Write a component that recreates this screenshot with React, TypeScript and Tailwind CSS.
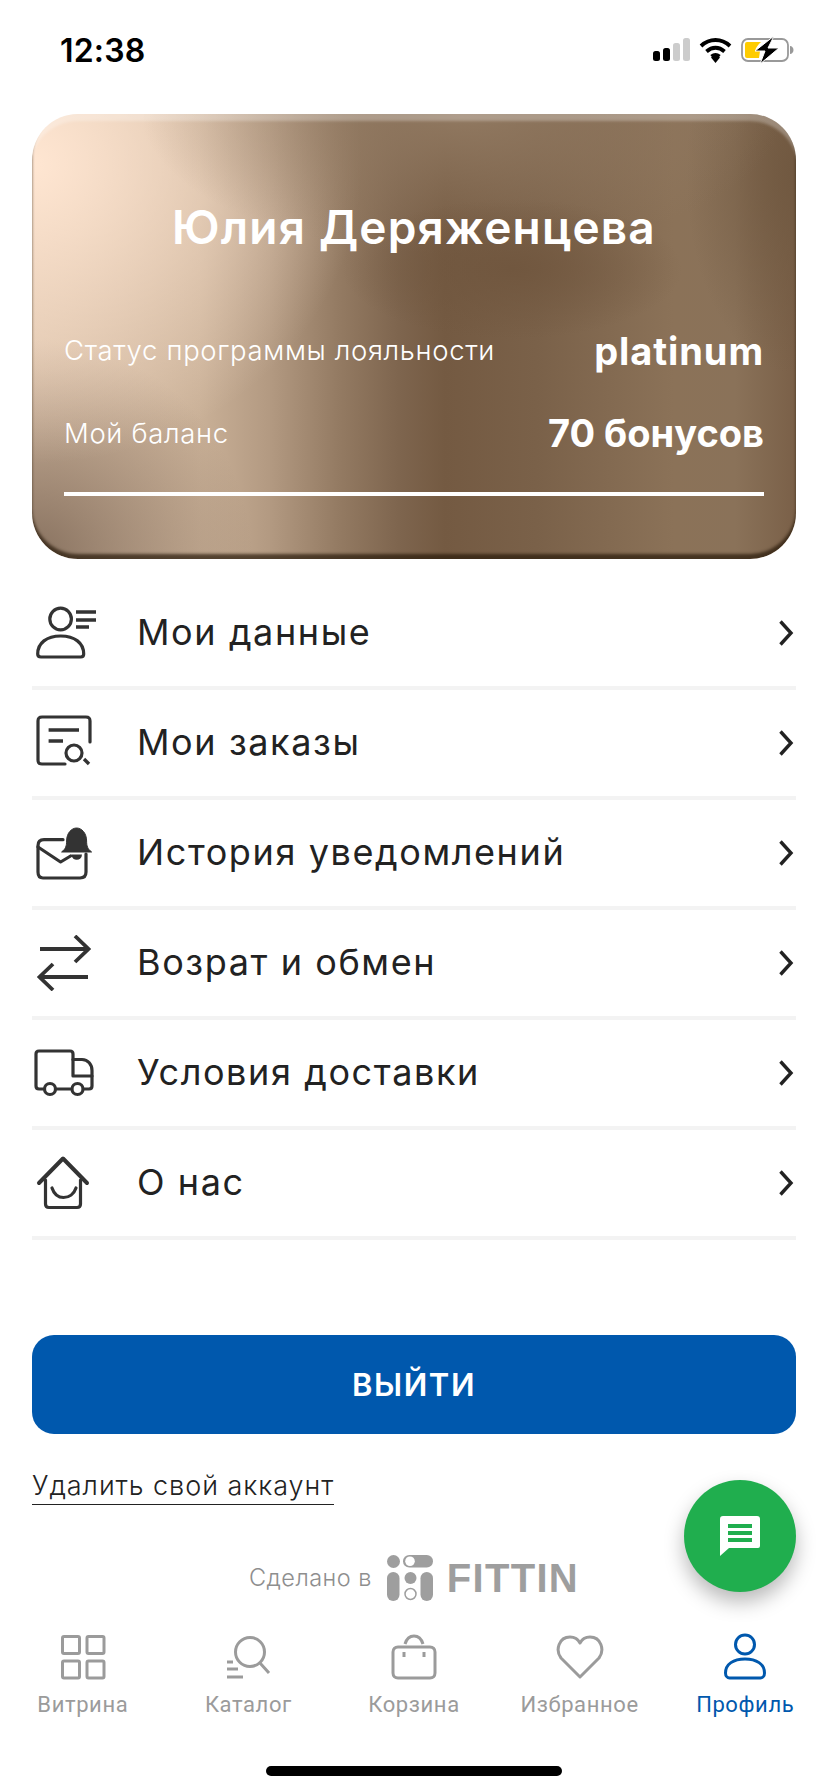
import React from "react";

const Mont = "font-['Inter','Liberation_Sans',sans-serif]";

function Chevron() {
  return (
    <svg width="16" height="28" viewBox="0 0 16 28" fill="none">
      <path d="M2.500 2.500L13 14 2.500 25.500" stroke="#222" strokeWidth="3.400" />
    </svg>
  );
}

const S = { fill: "none", stroke: "#333", strokeWidth: 3.2, strokeLinejoin: "round" as const, strokeLinecap: "round" as const };
const L = { fill: "none", stroke: "#333", strokeWidth: 3.4 };

function IconUser() {
  return (
    <svg width="64" height="56" viewBox="0 0 64 56">
      <circle cx="26.600" cy="14" r="10.800" {...S} />
      <path d="M3.700 49c0-11 9-18 23-18s23 7 23 18c0 2-1 3-3 3H7c-2 0-3.300-1-3.300-3z" {...S} />
      <path d="M42 7h20M42 15h20M42 22h13" {...L} />
    </svg>
  );
}
function IconOrders() {
  return (
    <svg width="64" height="56" viewBox="0 0 64 56">
      <path d="M56 27V6c0-3-1-4-4-4H8C5 2 4 3 4 6v39c0 3 1 4 4 4h23" {...S} />
      <path d="M14.600 15H45M14.600 26H29" {...L} />
      <circle cx="40" cy="38" r="8" {...S} />
      <path d="M50 44l5 5" {...L} />
    </svg>
  );
}
function IconMail() {
  return (
    <svg width="64" height="56" viewBox="0 0 64 56">
      <path d="M29 14.700H10c-4 0-6 2-6 6V47c0 4 2 6 5 6h37c4 0 6-2 6-6V29" {...S} />
      <path d="M4 22l22.600 15 10-6" {...S} />
      <path d="M27.600 27c4-3 5-6 5-11 0-8 5-13 10-13s10 5 10 13c0 5 1 8 5 11z" fill="#333" stroke="#333" strokeWidth="1" strokeLinejoin="round" />
      <path d="M37.500 29.500H48a5.250 5.250 0 0 1-10.500 0z" fill="#333" />
    </svg>
  );
}
function IconSwap() {
  return (
    <svg width="64" height="56" viewBox="0 0 64 56">
      <path d="M6 14h48M41 1l13.500 13L41 27M54 42H6M19 29L5.500 42 19 55" {...L} strokeWidth={3.800} />
    </svg>
  );
}
function IconTruck() {
  return (
    <svg width="64" height="56" viewBox="0 0 64 56">
      <path d="M10 44H5c-2 0-3-1-3-3V9c0-2 1-3 3-3h31c2 0 3 1 3 3v22h19" {...S} />
      <path d="M39 14.500h9c6 0 10 5 10 11V41c0 2-1 3-3 3h-5" {...S} />
      <path d="M22 44h15" {...S} />
      <circle cx="16" cy="44" r="5.500" {...S} />
      <circle cx="43.500" cy="44" r="5.500" {...S} />
    </svg>
  );
}
function IconHome() {
  return (
    <svg width="64" height="56" viewBox="0 0 64 56">
      <path d="M5 28L29 3.500 53 28" {...S} strokeWidth={4} />
      <path d="M11.500 25v24c0 2 1 3.500 3.500 3.500h28c2.500 0 3.500-1.500 3.500-3.500V25" {...S} />
      <path d="M18 33c2 6 6 9.500 11.500 9.500S40 39 42 33" {...S} />
    </svg>
  );
}

const rows: [string, React.ReactNode][] = [
  ["Мои данные", <IconUser />],
  ["Мои заказы", <IconOrders />],
  ["История уведомлений", <IconMail />],
  ["Возрат и обмен", <IconSwap />],
  ["Условия доставки", <IconTruck />],
  ["О нас", <IconHome />],
];

const G = { fill: "none", stroke: "#9b9b9b", strokeWidth: 3, strokeLinejoin: "round" as const };

const tabs: [string, React.ReactNode, boolean][] = [
  ["Витрина", (
    <svg width="46" height="46" viewBox="0 0 46 46">
      <rect x="2.500" y="2.500" width="17" height="17" rx="1.500" {...G} />
      <rect x="27" y="2.500" width="17" height="17" rx="1.500" {...G} />
      <rect x="2.500" y="27" width="17" height="17" rx="1.500" {...G} />
      <rect x="27" y="27" width="17" height="17" rx="1.500" {...G} />
    </svg>
  ), false],
  ["Каталог", (
    <svg width="46" height="46" viewBox="0 0 46 46">
      <circle cx="25" cy="18" r="14.500" {...G} />
      <path d="M35 29l9 10M2 28h6M2 35h11M2 43h16" fill="none" stroke="#9b9b9b" strokeWidth="3" />
    </svg>
  ), false],
  ["Корзина", (
    <svg width="46" height="46" viewBox="0 0 46 46">
      <path d="M7 13h32c3 0 5 2 5 5v21c0 3-2 5-5 5H7c-3 0-5-2-5-5V18c0-3 2-5 5-5z" {...G} />
      <path d="M13 23v-5M33 23v-5" fill="none" stroke="#9b9b9b" strokeWidth="3" />
      <path d="M14 10c1.500-5 5-8 9-8s7.500 3 9 8" {...G} />
    </svg>
  ), false],
  ["Избранное", (
    <svg width="48" height="46" viewBox="0 0 48 46">
      <path d="M24 43L5 24C-1 16 3 3 14 3c5 0 8 2 10 6 2-4 5-6 10-6 11 0 15 13 9 21z" {...G} />
    </svg>
  ), false],
  ["Профиль", (
    <svg width="46" height="48" viewBox="0 0 46 48">
      <circle cx="23" cy="11.500" r="9.500" fill="none" stroke="#0058ad" strokeWidth="3" />
      <path d="M3.500 40c0-9 8-14 19.500-14s19.500 5 19.500 14c0 3-2 5-4 5H7.500c-2 0-4-2-4-5z" fill="none" stroke="#0058ad" strokeWidth="3" />
    </svg>
  ), true],
];

export default function App() {
  return (
    <div className={`relative w-[828px] h-[1792px] bg-white overflow-hidden ${Mont}`}>
      {/* status bar */}
      <div className="flex items-center justify-between h-[100px] pl-[60px] pr-[34px]">
        <span className="text-[32px] font-semibold text-black tracking-[0.2px] mt-[1px]">12:38</span>
        <div className="flex items-center gap-[9px]">
          <svg width="37" height="24" viewBox="0 0 37 24">
            <rect x="0" y="13" width="7" height="10" rx="2.500" fill="#000" />
            <rect x="10" y="10" width="7" height="13" rx="2.500" fill="#000" />
            <rect x="20" y="5" width="7" height="18" rx="2.500" fill="#ccc" />
            <rect x="30" y="0" width="7" height="23" rx="2.500" fill="#ccc" />
          </svg>
          <svg width="33" height="26" viewBox="0 0 33 26">
            <path d="M2 9c8.500-8 20.500-8 29 0M7.500 14.500c5.500-5 12.500-5 18 0M12.500 19.500c2.500-2 5.500-2 8 0" fill="none" stroke="#000" strokeWidth="3.800" />
            <path d="M12 20.500L16.500 26l4.500-5.500c-2.500-2.500-6.500-2.500-9 0z" fill="#000" />
          </svg>
          <svg width="53" height="28" viewBox="0 0 53 28">
            <rect x="1" y="3" width="46" height="22" rx="6" fill="none" stroke="#999" strokeWidth="1.800" />
            <path d="M4 8a2 2 0 0 1 2-2h14c-3 3-5 5-6 9h5l-1 7H6a2 2 0 0 1-2-2z" fill="#ffcc00" />
            <path d="M33 0L14 15h10l-5 13 19-16H27z" fill="#000" stroke="#fff" strokeWidth="1" />
            <path d="M49 10c2 0 3.500 2 3.500 4s-1.500 4-3.500 4z" fill="#999" />
          </svg>
        </div>
      </div>

      <main className="px-[32px] pt-[14px]">
        {/* card */}
        <section className="h-[445px] rounded-[46px] overflow-hidden pt-[88px] px-[32px] text-white [background-image:radial-gradient(ellipse_170px_70px_at_480px_155px,rgba(112,86,62,0.9),rgba(112,86,62,0)),radial-gradient(ellipse_320px_140px_at_430px_0px,rgba(146,122,98,0.95),rgba(146,122,98,0)),radial-gradient(ellipse_110px_200px_at_100%_60px,rgba(112,88,64,0.95),rgba(112,88,64,0)),radial-gradient(ellipse_330px_300px_at_0px_50px,rgba(255,230,210,1),rgba(255,230,210,0.5)_50%,rgba(255,230,210,0)),radial-gradient(ellipse_220px_220px_at_0px_100%,rgba(130,108,90,0.95),rgba(130,108,90,0)),linear-gradient(90deg,#d9c0a8_0%,#c9b097_22%,#b39a82_31%,#947b63_40%,#7e654e_48%,#745a42_54%,#7a6149_66%,#8b7258_84%,#8a7259_92%,#7a6048_100%)] shadow-[inset_0_-5px_3px_rgba(40,25,10,0.7),inset_0_9px_3px_-2px_rgba(255,255,255,0.28)]">
          <h1 className="text-center text-[46px] leading-[50px] font-semibold tracking-[1.2px]">Юлия Деряженцева</h1>
          <div className="flex items-center justify-between mt-[69px] h-[60px]">
            <span className="text-[27.500px] font-light tracking-[0.65px]">Статус программы лояльности</span>
            <span className="text-[38px] font-bold tracking-[0.9px]">platinum</span>
          </div>
          <div className="flex items-center justify-between mt-[22px] h-[60px]">
            <span className="text-[27.500px] font-light tracking-[0.65px] mt-[2px]">Мой баланс</span>
            <span className="text-[38px] font-bold">70 бонусов</span>
          </div>
          <div className="h-[4px] bg-white mt-[29px]" />
        </section>

        {/* menu */}
        <ul className="mt-[21px]">
          {rows.map(([label, icon]) => (
            <li key={label} className="flex items-center h-[110px] border-b-[4px] border-[#f3f3f3]">
              <span className="w-[64px] ml-[2px] flex shrink-0">{icon}</span>
              <span className="ml-[39px] pb-[3px] flex-1 text-[36px] text-[#222] tracking-[1.6px]">{label}</span>
              <span className="mr-[2px] flex"><Chevron /></span>
            </li>
          ))}
        </ul>

        <button className="mt-[95px] w-full h-[99px] pt-[2px] rounded-[22px] bg-[#0058ad] text-white text-[31px] font-semibold tracking-[1.6px]">ВЫЙТИ</button>

        <a className="block w-fit mt-[35px] text-[27px] leading-[34px] text-[#222] border-b border-[#222] tracking-[0.95px] font-light pb-[1px]">Удалить свой аккаунт</a>

        <div className="flex items-center justify-center mt-[48px] h-[50px]">
          <span className="text-[23.500px] font-light text-[#8e8e8e] tracking-[0.45px]">Сделано в</span>
          <svg width="46" height="46" viewBox="0 0 46 46" className="ml-[15px]">
            <circle cx="6.500" cy="6.500" r="6.500" fill="#9e9e9e" />
            <rect x="16" y="0" width="30" height="12.500" rx="6.250" fill="#9e9e9e" />
            <circle cx="23" cy="6.250" r="4.800" fill="#fff" />
            <rect x="0" y="17" width="12.500" height="29" rx="6.250" fill="#9e9e9e" />
            <circle cx="23.500" cy="23" r="6" fill="#9e9e9e" />
            <circle cx="23.500" cy="39" r="5.500" fill="none" stroke="#9e9e9e" strokeWidth="1.500" />
            <rect x="33.500" y="17" width="12.500" height="29" rx="6.250" fill="#9e9e9e" />
          </svg>
          <span className="ml-[14px] text-[40px] leading-none font-bold text-[#9e9e9e] tracking-[1.3px] font-['Liberation_Sans',sans-serif]">FITTIN</span>
        </div>
      </main>

      {/* tab bar */}
      <nav className="absolute left-0 right-0 top-[1632px] grid grid-cols-5">
        {tabs.map(([label, icon, active]) => (
          <div key={label} className="flex flex-col items-center">
            <span className="h-[50px] flex items-center">{icon}</span>
            <span className={`mt-[9px] text-[22px] leading-[28px] tracking-[0.6px] font-['Roboto',sans-serif] ${active ? "text-[#0058ad]" : "text-[#9b9b9b]"}`}>{label}</span>
          </div>
        ))}
      </nav>

      {/* home indicator */}
      <div className="absolute left-[266px] top-[1766px] w-[296px] h-[10px] rounded-full bg-black" />

      {/* chat FAB */}
      <div className="absolute left-[684px] top-[1480px] w-[112px] h-[112px] rounded-full bg-[#20ae4e] flex items-center justify-center shadow-[0_10px_20px_rgba(0,0,0,0.28)]">
        <svg width="40" height="40" viewBox="0 0 40 40">
          <path d="M3 0h34a3 3 0 0 1 3 3v27a2 2 0 0 1-2 2H9l-9 8V3a3 3 0 0 1 3-3z" fill="#fff" />
          <path d="M8 8h24v4H8zM8 15h24v4H8zM8 22h24v4H8z" fill="#20ae4e" />
        </svg>
      </div>
    </div>
  );
}
